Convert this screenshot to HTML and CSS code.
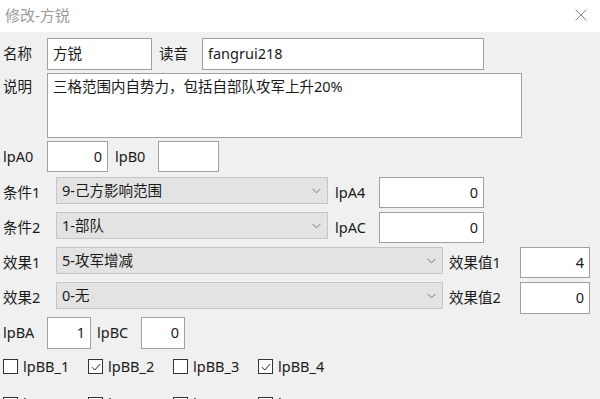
FILE: index.html
```html
<!DOCTYPE html>
<html>

<head>
    <meta charset="utf-8">
    <title>修改-方锐</title>
    <link rel="stylesheet" href="styles.css">
</head>

<body>
    <div class="titlebar">
        <div class="title">修改-方锐</div>
        <svg class="close" width="12" height="12" viewBox="0 0 12 12">
            <path d="M0.5 0.5L11.5 11.5M11.5 0.5L0.5 11.5" stroke="#8a8a8a" stroke-width="1" fill="none"/>
        </svg>
    </div>
    <div class="form">
        <div class="row r1">
            <div class="lb w44">名称</div>
            <div class="ipt w105">方锐</div>
            <div class="lb w43 ml7">读音</div>
            <div class="ipt w282">fangrui218</div>
        </div>
        <div class="row r2">
            <div class="lb w44 top">说明</div>
            <div class="ipt area">三格范围内自势力，包括自部队攻军上升20%</div>
        </div>
        <div class="row r3">
            <div class="lb w44">lpA0</div>
            <div class="ipt w61 num">0</div>
            <div class="lb w43 ml7">lpB0</div>
            <div class="ipt w61 num"></div>
        </div>
        <div class="row r4">
            <div class="lb w53">条件1</div>
            <div class="sel w272"><span>9-己方影响范围</span><svg width="9" height="6" viewBox="0 0 9 6"><path d="M0.5 0.8L4.5 4.8L8.5 0.8" stroke="#777" fill="none"/></svg></div>
            <div class="lb w44 ml7">lpA4</div>
            <div class="ipt w105 num">0</div>
        </div>
        <div class="row r5">
            <div class="lb w53">条件2</div>
            <div class="sel w272"><span>1-部队</span><svg width="9" height="6" viewBox="0 0 9 6"><path d="M0.5 0.8L4.5 4.8L8.5 0.8" stroke="#777" fill="none"/></svg></div>
            <div class="lb w44 ml7">lpAC</div>
            <div class="ipt w105 num">0</div>
        </div>
        <div class="row r6">
            <div class="lb w53">效果1</div>
            <div class="sel w387"><span>5-攻军增减</span><svg width="9" height="6" viewBox="0 0 9 6"><path d="M0.5 0.8L4.5 4.8L8.5 0.8" stroke="#777" fill="none"/></svg></div>
            <div class="lb w71 ml6">效果值1</div>
            <div class="ipt w70 num">4</div>
        </div>
        <div class="row r7">
            <div class="lb w53">效果2</div>
            <div class="sel w387"><span>0-无</span><svg width="9" height="6" viewBox="0 0 9 6"><path d="M0.5 0.8L4.5 4.8L8.5 0.8" stroke="#777" fill="none"/></svg></div>
            <div class="lb w71 ml6">效果值2</div>
            <div class="ipt w70 num">0</div>
        </div>
        <div class="row r8">
            <div class="lb w44">lpBA</div>
            <div class="ipt w44 num">1</div>
            <div class="lb w44 ml6">lpBC</div>
            <div class="ipt w44 num">0</div>
        </div>
        <div class="checks c1">
            <div class="chk"><span class="box"></span>lpBB_1</div>
            <div class="chk"><span class="box"><svg width="12" height="12" viewBox="0 0 12 12"><path d="M2 6.2L4.8 9L10.2 3" stroke="#222" fill="none"/></svg></span>lpBB_2</div>
            <div class="chk"><span class="box"></span>lpBB_3</div>
            <div class="chk"><span class="box"><svg width="12" height="12" viewBox="0 0 12 12"><path d="M2 6.2L4.8 9L10.2 3" stroke="#222" fill="none"/></svg></span>lpBB_4</div>
        </div>
        <div class="checks c2">
            <div class="chk"><span class="box"></span>lpBB_5</div>
            <div class="chk"><span class="box"></span>lpBB_6</div>
            <div class="chk"><span class="box"></span>lpBB_7</div>
            <div class="chk"><span class="box"></span>lpBB_8</div>
        </div>
    </div>
</body>

</html>
```

FILE: styles.css
```css
* {
    box-sizing: border-box;
}

html,
body {
    margin: 0;
    height: 100%;
    overflow: hidden;
}

body {
    background-color: #f0f0f0;
    font-family: "Noto Sans", "Noto Sans CJK SC", sans-serif;
    font-size: 14.5px;
    color: #1a1a1a;
    line-height: 1.2;
}

.titlebar {
    height: 32px;
    background-color: #fff;
    display: flex;
    align-items: center;
    justify-content: space-between;
    padding: 0 13px 2px 5px;
}

.title {
    color: #9a9a9a;
    font-size: 15px;
}

.form {
    padding: 6px 0 0 3px;
}

.row {
    display: flex;
    align-items: center;
}

.lb {
    flex: none;
    white-space: nowrap;
}

.lb.top {
    align-self: flex-start;
    padding-top: 5px;
}

.ipt {
    flex: none;
    height: 32px;
    background-color: #fff;
    border: 1px solid #a0a0a0;
    padding: 0 5px;
    display: flex;
    align-items: center;
    white-space: nowrap;
}

.ipt.num {
    justify-content: flex-end;
}

.ipt.area {
    width: 475px;
    height: 65px;
    align-items: flex-start;
    padding-top: 4px;
}

.sel {
    flex: none;
    height: 27px;
    background-color: #e3e3e3;
    border: 1px solid #c6c6c6;
    padding: 0 6px 0 5px;
    display: flex;
    align-items: center;
    justify-content: space-between;
    align-self: flex-start;
}

.w43 { width: 43px; }
.w44 { width: 44px; }
.w53 { width: 53px; }
.w61 { width: 61px; }
.w70 { width: 70px; }
.w71 { width: 71px; }
.w105 { width: 105px; }
.w272 { width: 272px; }
.w282 { width: 282px; }
.w387 { width: 387px; }
.ml6 { margin-left: 6px; }
.ml7 { margin-left: 7px; }

.r1 { margin-top: 0; }
.r2 { margin-top: 3px; }
.r3 { margin-top: 3px; }
.r3 .ipt { height: 31px; }
.r4 { margin-top: 5px; }
.r4 .ipt,
.r5 .ipt,
.r6 .ipt { height: 31px; }
.r5 { margin-top: 4px; }
.r6 { margin-top: 4px; }
.r7 { margin-top: 4px; }
.r8 { margin-top: 3px; }

.checks {
    display: flex;
}

.c1 { margin-top: 9px; }
.c2 { margin-top: 20px; }

.chk {
    width: 85px;
    display: flex;
    align-items: center;
    flex: none;
}

.box {
    width: 15px;
    height: 15px;
    border: 1px solid #333;
    background-color: #fff;
    margin-right: 5px;
    display: flex;
    align-items: center;
    justify-content: center;
}
```
